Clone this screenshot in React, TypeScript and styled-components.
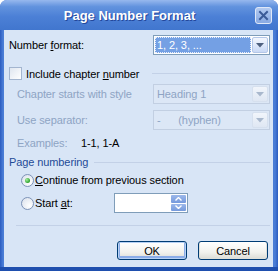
import React from "react";
import styled, { createGlobalStyle } from "styled-components";

const GlobalStyle = createGlobalStyle`
  html, body {
    margin: 0;
    padding: 0;
    background: #ffffff;
  }
  body {
    font-family: "Liberation Sans", Arial, sans-serif;
    font-size: 11px;
    letter-spacing: -0.1px;
    color: #000000;
  }
`;

const COLORS = {
  FACE: "#d8e5f6",
  DISABLED: "#8ea4c4",
  GROUP: "#1f4b96",
  LINE: "#c3d1e7",
  FIELD_BORDER: "#7f9db9",
};

const Window = styled.div`
  width: 278px;
  height: 271px;
  box-sizing: border-box;
  display: flex;
  flex-direction: column;
  padding-bottom: 4px;
  border-radius: 7px 7px 0 0;
  overflow: hidden;
  background: linear-gradient(to right, #2b5cc0 0, #4a7dd6 3px, #4a7dd6 calc(100% - 3px), #2b5cc0 100%);
  box-shadow: inset 0 -4px 0 #1f4fae;
`;

const TitleBar = styled.div`
  height: 30px;
  flex-shrink: 0;
  display: flex;
  align-items: center;
  padding: 0 6px 0 4px;
  background: linear-gradient(#97b8ee 0%, #6293de 22%, #4c80d6 55%, #4176ce 100%);
`;

const Title = styled.span`
  flex: 1;
  text-align: center;
  font-size: 13px;
  font-weight: bold;
  letter-spacing: 0;
  color: #ffffff;
  text-shadow: 1px 1px 0 #23479a;
`;

const CloseButton = styled.div`
  width: 17px;
  height: 17px;
  display: flex;
`;

const Client = styled.div`
  flex: 1;
  margin: 0 5px 0 4px;
  display: flex;
  flex-direction: column;
  padding-left: 5px;
  background: ${COLORS.FACE};
`;

const Row = styled.div<{ $h: number; $mt: number; $indent?: number }>`
  height: ${(p) => p.$h}px;
  margin-top: ${(p) => p.$mt}px;
  padding-left: ${(p) => p.$indent ?? 0}px;
  padding-right: 3px;
  display: flex;
  align-items: center;
  flex-shrink: 0;
`;

const Label = styled.span<{ $muted?: boolean; $w?: number }>`
  color: ${(p) => (p.$muted ? COLORS.DISABLED : "#000000")};
  white-space: nowrap;
  ${(p) => (p.$w ? `width: ${p.$w}px;` : "")}
  flex-shrink: 0;
`;

const Combo = styled.div<{ $disabled?: boolean }>`
  margin-left: auto;
  width: 117px;
  height: 20px;
  box-sizing: border-box;
  display: flex;
  padding: 1px;
  border: 1px solid ${(p) => (p.$disabled ? "#c2cfe2" : COLORS.FIELD_BORDER)};
  background: ${(p) => (p.$disabled ? "#dce7f6" : "#ffffff")};
`;

const ComboValue = styled.div<{ $selected?: boolean; $disabled?: boolean }>`
  flex: 1;
  display: flex;
  align-items: center;
  padding-left: 2px;
  box-sizing: border-box;
  color: ${(p) => (p.$selected ? "#ffffff" : p.$disabled ? COLORS.DISABLED : "#000000")};
  background: ${(p) => (p.$selected ? "#74a0e4" : "transparent")};
  outline: ${(p) => (p.$selected ? "1px dotted #e8eefa" : "none")};
  outline-offset: -1px;
  margin-right: 1px;
  white-space: pre;
`;

const ComboButton = styled.div<{ $disabled?: boolean }>`
  width: 16px;
  box-sizing: border-box;
  display: flex;
  align-items: center;
  justify-content: center;
  border: 1px solid ${(p) => (p.$disabled ? "#d6e0ee" : "#b4c7e8")};
  border-radius: 2px;
  background: ${(p) =>
    p.$disabled
      ? "linear-gradient(#f1f5fb, #dfe7f3)"
      : "linear-gradient(#f4f7fe, #c9d9f6)"};
`;

const CheckBox = styled.span`
  width: 13px;
  height: 13px;
  box-sizing: border-box;
  flex-shrink: 0;
  border: 1px solid #a3b5cf;
  background: linear-gradient(135deg, #dfe6f0, #ffffff);
  margin-right: 4px;
`;

const Line = styled.div<{ $w?: number }>`
  height: 1px;
  background: ${COLORS.LINE};
  ${(p) => (p.$w ? `width: ${p.$w}px; margin-left: auto;` : "flex: 1; margin-left: 6px;")}
`;

const GroupTitle = styled.span`
  color: ${COLORS.GROUP};
  white-space: nowrap;
`;

const Radio = styled.span<{ $checked?: boolean }>`
  width: 13px;
  height: 13px;
  box-sizing: border-box;
  flex-shrink: 0;
  border-radius: 50%;
  border: 1px solid #7d93b7;
  background: radial-gradient(circle at 70% 70%, #ffffff 0%, #e4e9f1 70%, #d3dae6 100%);
  margin-right: 1px;
  display: flex;
  align-items: center;
  justify-content: center;

  &::after {
    content: "";
    display: ${(p) => (p.$checked ? "block" : "none")};
    width: 5px;
    height: 5px;
    border-radius: 50%;
    background: radial-gradient(circle at 35% 35%, #a6f0a0, #2ca12c 70%);
  }
`;

const SpinBox = styled.div`
  width: 74px;
  height: 20px;
  box-sizing: border-box;
  display: flex;
  justify-content: flex-end;
  padding: 1px;
  border: 1px solid ${COLORS.FIELD_BORDER};
  background: #ffffff;
`;

const SpinButtons = styled.div`
  width: 15px;
  display: flex;
  flex-direction: column;
  gap: 1px;
`;

const SpinButton = styled.div`
  flex: 1;
  display: flex;
  align-items: center;
  justify-content: center;
  border-radius: 1px;
  background: linear-gradient(#9cb8ea, #7599dc);
`;

const Separator = styled.div`
  height: 1px;
  margin: 12px 3px 0 7px;
  background: ${COLORS.LINE};
  flex-shrink: 0;
`;

const ButtonRow = styled.div`
  margin-top: 15px;
  display: flex;
  justify-content: flex-end;
  gap: 11px;
  padding-right: 5px;
`;

const Button = styled.button<{ $default?: boolean }>`
  width: 70px;
  height: 19px;
  box-sizing: border-box;
  padding: 0;
  font-family: inherit;
  font-size: 11px;
  letter-spacing: -0.1px;
  color: #000000;
  border: 1px solid #003c74;
  border-radius: 3px;
  background: linear-gradient(#ffffff, #f2f2ee 60%, #dcdcd6);
  box-shadow: ${(p) =>
    p.$default
      ? "inset 0 0 0 1px #b7d1f4, inset 0 -1px 0 2px #8cade8"
      : "inset 0 -1px 0 1px #e0e0da"};
`;

function DropArrow({ disabled }: { disabled?: boolean }) {
  return (
    <svg width="8" height="5" viewBox="0 0 8 5">
      <path d="M0 0 H8 L4 4.5 Z" fill={disabled ? "#a9b8cd" : "#4e607f"} />
    </svg>
  );
}

function Chevron({ up }: { up?: boolean }) {
  return (
    <svg width="7" height="4" viewBox="0 0 7 4">
      <path
        d={up ? "M0.5 3.5 L3.5 0.5 L6.5 3.5" : "M0.5 0.5 L3.5 3.5 L6.5 0.5"}
        fill="none"
        stroke="#ffffff"
        strokeWidth="1.4"
      />
    </svg>
  );
}

function CloseIcon() {
  return (
    <svg width="17" height="17" viewBox="0 0 17 17">
      <defs>
        <linearGradient id="closeFill" x1="0" y1="0" x2="0" y2="1">
          <stop offset="0" stopColor="#b4cbf1" />
          <stop offset="1" stopColor="#86a8e2" />
        </linearGradient>
      </defs>
      <rect x="0.5" y="0.5" width="16" height="16" rx="2.5" fill="url(#closeFill)" stroke="#dfe8f8" />
      <path d="M5 5 L12 12 M12 5 L5 12" stroke="#3b5b98" strokeWidth="2" strokeLinecap="square" />
    </svg>
  );
}

export default function App() {
  return (
    <>
      <GlobalStyle />
      <Window>
        <TitleBar>
          <Title>Page Number Format</Title>
          <CloseButton>
            <CloseIcon />
          </CloseButton>
        </TitleBar>
        <Client>
          <Row $h={20} $mt={5}>
            <Label>
              Number <u>f</u>ormat:
            </Label>
            <Combo>
              <ComboValue $selected>1, 2, 3, ...</ComboValue>
              <ComboButton>
                <DropArrow />
              </ComboButton>
            </Combo>
          </Row>

          <Row $h={13} $mt={12}>
            <CheckBox />
            <Label>
              Include chapter <u>n</u>umber
            </Label>
            <Line $w={118} />
          </Row>

          <Row $h={20} $mt={4} $indent={8}>
            <Label $muted>Chapter starts with style</Label>
            <Combo $disabled>
              <ComboValue $disabled>Heading 1</ComboValue>
              <ComboButton $disabled>
                <DropArrow disabled />
              </ComboButton>
            </Combo>
          </Row>

          <Row $h={20} $mt={6} $indent={8}>
            <Label $muted>Use separator:</Label>
            <Combo $disabled>
              <ComboValue $disabled>{"-      (hyphen)"}</ComboValue>
              <ComboButton $disabled>
                <DropArrow disabled />
              </ComboButton>
            </Combo>
          </Row>

          <Row $h={14} $mt={6} $indent={8}>
            <Label $muted $w={64}>
              Examples:
            </Label>
            <Label>1-1, 1-A</Label>
          </Row>

          <Row $h={14} $mt={5}>
            <GroupTitle>Page numbering</GroupTitle>
            <Line />
          </Row>

          <Row $h={14} $mt={4} $indent={12}>
            <Radio $checked />
            <Label>
              <u>C</u>ontinue from previous section
            </Label>
          </Row>

          <Row $h={20} $mt={6} $indent={12}>
            <Radio />
            <Label $w={79}>
              Start <u>a</u>t:
            </Label>
            <SpinBox>
              <SpinButtons>
                <SpinButton>
                  <Chevron up />
                </SpinButton>
                <SpinButton>
                  <Chevron />
                </SpinButton>
              </SpinButtons>
            </SpinBox>
          </Row>

          <Separator />

          <ButtonRow>
            <Button $default>OK</Button>
            <Button>Cancel</Button>
          </ButtonRow>
        </Client>
      </Window>
    </>
  );
}
